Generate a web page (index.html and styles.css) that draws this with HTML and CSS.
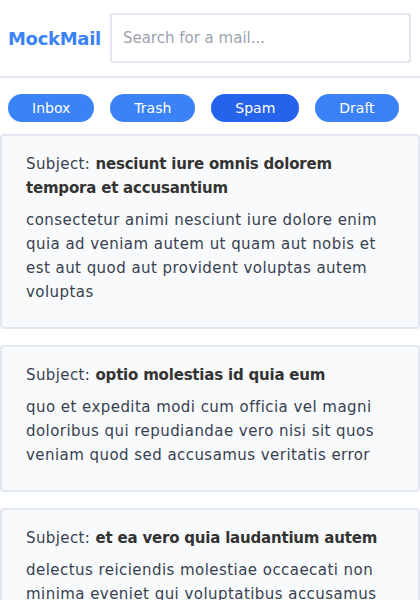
FILE: index.html
```html
<!DOCTYPE html>
<html lang="en">
<head>
<meta charset="utf-8">
<title>MockMail</title>
<link rel="stylesheet" href="styles.css">
</head>
<body>
<header class="topbar">
  <h1 class="logo">MockMail</h1>
  <input class="search" type="text" placeholder="Search for a mail...">
</header>
<nav class="folders">
  <button class="folder">Inbox</button>
  <button class="folder">Trash</button>
  <button class="folder folder-active">Spam</button>
  <button class="folder">Draft</button>
</nav>
<main class="mail-list">
  <article class="mail">
    <p class="mail-subject">Subject: <strong>nesciunt iure omnis dolorem tempora et accusantium</strong></p>
    <p class="mail-body">consectetur animi nesciunt iure dolore enim quia ad veniam autem ut quam aut nobis et est aut quod aut provident voluptas autem voluptas</p>
  </article>
  <article class="mail">
    <p class="mail-subject">Subject: <strong>optio molestias id quia eum</strong></p>
    <p class="mail-body">quo et expedita modi cum officia vel magni doloribus qui repudiandae vero nisi sit quos veniam quod sed accusamus veritatis error</p>
  </article>
  <article class="mail">
    <p class="mail-subject">Subject: <strong>et ea vero quia laudantium autem</strong></p>
    <p class="mail-body">delectus reiciendis molestiae occaecati non minima eveniet qui voluptatibus accusamus in eum beatae sit</p>
  </article>
</main>
</body>
</html>
```

FILE: styles.css
```css
* {
  box-sizing: border-box;
}

html, body {
  margin: 0;
  padding: 0;
  background: #ffffff;
}

body {
  font-family: "DejaVu Sans", "Noto Sans", sans-serif;
  color: #374151;
}

.topbar {
  display: flex;
  align-items: center;
  gap: 9px;
  padding: 13px 9px 13px 8px;
  border-bottom: 2px solid #e2e8f0;
}

.logo {
  margin: 0;
  font-size: 18px;
  font-weight: 700;
  letter-spacing: -0.3px;
  color: #3b82f6;
  white-space: nowrap;
}

.search {
  flex: 1;
  min-width: 0;
  height: 50px;
  margin: 0;
  padding: 0 11px;
  border: 2px solid #e2e8f0;
  border-radius: 2px;
  font-family: "DejaVu Sans", sans-serif;
  font-size: 15px;
  color: #374151;
  background: #ffffff;
  outline: none;
}

.search::placeholder {
  color: #9ca3af;
}

.folders {
  display: flex;
  gap: 16px;
  padding: 16px 8px 12px;
}

.folder {
  height: 28px;
  padding: 0 24px;
  border: none;
  border-radius: 9999px;
  background: #3b82f6;
  color: #ffffff;
  font-family: "DejaVu Sans", sans-serif;
  font-size: 14px;
  line-height: 28px;
}

.folder-active {
  background: #2563eb;
}

.mail-list {
  display: flex;
  flex-direction: column;
  gap: 16px;
}

.mail {
  padding: 16px 24px 23px;
  border: 2px solid #e2e8f0;
  border-radius: 4px;
  background: #f9fafb;
}

.mail-subject {
  margin: 0 0 8px;
  font-size: 15px;
  line-height: 24px;
  letter-spacing: 0.4px;
  color: #374151;
}

.mail-subject strong {
  font-weight: 700;
  color: #333333;
  letter-spacing: -0.2px;
}

.mail-body {
  margin: 0;
  font-size: 15px;
  line-height: 24px;
  letter-spacing: 0.45px;
  color: #374151;
}
```
